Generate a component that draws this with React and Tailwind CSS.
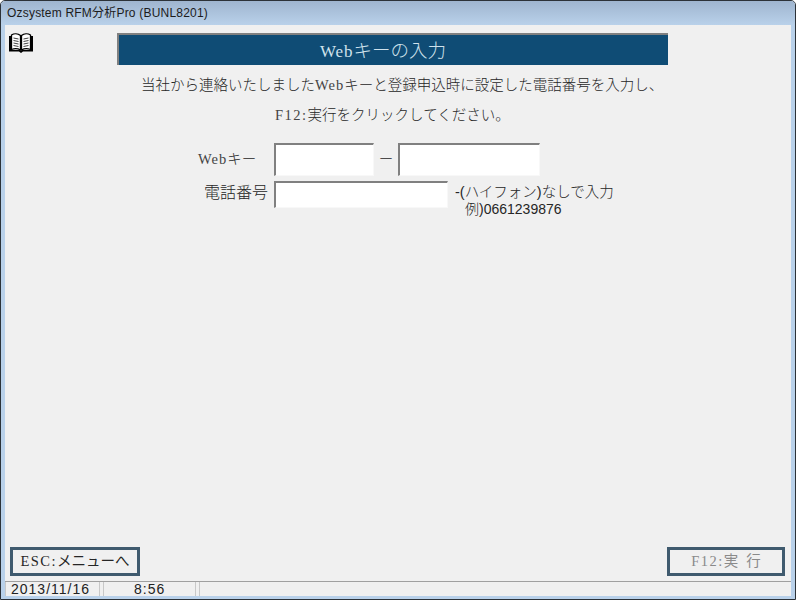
const serif = "font-['Liberation_Serif','Noto_Sans_CJK_JP',serif]";
const sans = "font-['Liberation_Sans','Noto_Sans_CJK_JP',sans-serif]";

function BookIcon() {
  return (
    <svg width="26" height="20" viewBox="0 0 26 20" className="shrink-0">
      <path d="M1 3h2V17h9l1 1 1-1h9V3h2V18.500H15L13 20l-2-1.500H1z" fill="#000" />
      <path d="M3.500 2C6 .5 10 .500 12.500 2.500V17C10 15.500 6 15.500 3.500 16.500z" fill="#fff" stroke="#000" strokeWidth="1.300" />
      <path d="M22.500 2C20 .5 16 .500 13.500 2.500V17C16 15.500 20 15.500 22.500 16.500z" fill="#fff" stroke="#000" strokeWidth="1.300" />
      <path d="M5.500 5l5 1M5.500 7.500l5 1M5.500 10l5 1M5.500 12.500l5 1M15.500 6l5-1M15.500 8.500l5-1M15.500 11l5-1M15.500 13.500l5-1" stroke="#444" strokeWidth="1" />
    </svg>
  );
}

function Latin({ children, className }) {
  return <span className={`text-[#444] ${className}`}>{children}</span>;
}

function Field({ className }) {
  return <div className={`bg-white border-t-2 border-l-2 border-t-[#808080] border-l-[#808080] border-r border-b border-r-[#f8f8f8] border-b-[#f8f8f8] ${className}`} />;
}

function CmdButton({ children, className }) {
  return (
    <div className={`h-[29px] border-[3px] border-[#3f5a6e] bg-[#f0f0f0] flex items-center justify-center text-[14.500px] whitespace-nowrap ${serif} ${className}`}>
      {children}
    </div>
  );
}

export default function App() {
  return (
    <div className={`w-[796px] h-[600px] flex flex-col overflow-hidden rounded-t-[5px] border border-[#2c3238] bg-[#f0f0f0] text-[#262626] ${serif}`}>
      <div className={`h-[24px] shrink-0 flex items-center pl-[6px] pb-[1px] bg-gradient-to-b from-[#9fb5cf] to-[#b9d1ea] text-[12px] text-[#1c1c1c] tracking-[0.2px] ${sans}`}>
        Ozsystem RFM分析Pro (BUNL8201)
      </div>
      <div className="flex-1 flex flex-col border-x-[4px] border-x-[#b9d1ea] min-h-0">
        <div className="flex items-start pt-[8px] pl-[3px]">
          <BookIcon />
          <div className="ml-[83px] w-[551px] h-[32px] pr-[21px] pt-[3px] bg-[#0f4c75] border-t-2 border-l-2 border-t-[#808080] border-l-[#808080] flex items-center justify-center text-[#cfe2ec] text-[18.500px] font-light">
            <span className="text-[17px] tracking-[1px]">Web</span>キーの入力
          </div>
        </div>
        <div className="mt-[9px] ml-[136px] text-[14.500px] leading-[22px] font-light whitespace-nowrap">
          当社から連絡いたしました<Latin className="tracking-[1px]">Web</Latin>キーと登録申込時に設定した電話番号を入力し、
        </div>
        <div className="mt-[8px] ml-[270px] text-[14.500px] leading-[22px] font-light whitespace-nowrap">
          <Latin className="tracking-[1.500px]">F12:</Latin>実行をクリックしてください。
        </div>
        <div className="mt-[17px] ml-[193px] flex items-center h-[33px]">
          <span className="w-[76px] text-[14.500px] font-light"><Latin className="tracking-[1px]">Web</Latin>キー</span>
          <Field className="w-[100px] h-[33px]" />
          <span className="w-[24px] text-center text-[14.500px] font-light">ー</span>
          <Field className="w-[142px] h-[33px]" />
        </div>
        <div className="mt-[5px] ml-[199px] flex items-start">
          <span className="w-[70px] text-[16px] leading-[24px] font-light">電話番号</span>
          <Field className="w-[174px] h-[27px]" />
          <div className={`ml-[7px] mt-[3px] text-[14.500px] leading-[17px] font-light whitespace-nowrap ${sans}`}>
            <div>-(ハイフォン)なしで入力</div>
            <div className="ml-[10px] text-[14px]">例)0661239876</div>
          </div>
        </div>
        <div className="flex-1" />
        <div className="flex justify-between pl-[5px] pr-[6px] pb-[5px]">
          <CmdButton className="w-[130px]"><span className="tracking-[1.500px]">ESC:</span>メニューへ</CmdButton>
          <CmdButton className="w-[118px] text-[#8a8a8a]"><span className="tracking-[1.500px]">F12:</span>実<span className="ml-[8px]">行</span></CmdButton>
        </div>
        <div className={`h-[15px] flex items-stretch border-t border-t-[#a0a0a0] text-[14px] leading-none text-[#222] tracking-[1px] ${sans}`}>
          <div className="w-[95px] border-x border-[#c8c8c8] flex items-center pl-[5px]">2013/11/16</div>
          <div className="w-[93px] ml-[3px] border-x border-[#c8c8c8] flex items-center pl-[30px]">8:56</div>
          <div className="flex-1 ml-[3px] border-l border-l-[#c8c8c8]" />
        </div>
      </div>
      <div className="h-[3px] shrink-0 bg-[#b9d1ea]" />
    </div>
  );
}
